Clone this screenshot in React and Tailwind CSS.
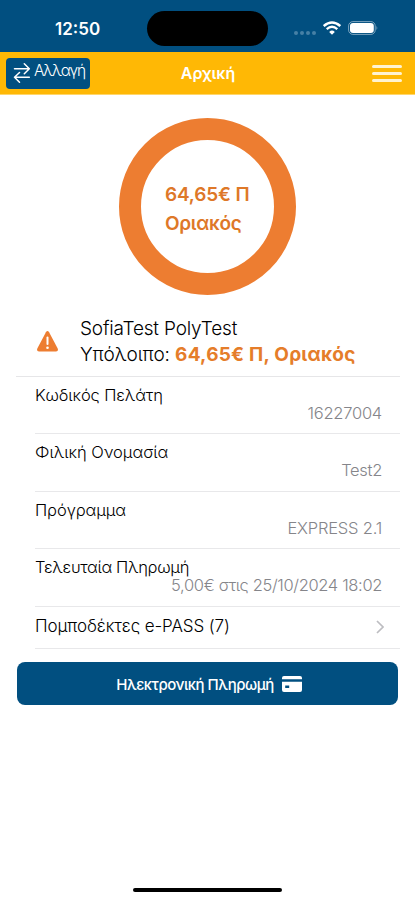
const ROWS = [
  { label: 'Κωδικός Πελάτη', value: '16227004', track: 'tracking-[-0.12px]', vtrack: 'tracking-[-0.25px]' },
  { label: 'Φιλική Ονομασία', value: 'Test2', track: 'tracking-[-0.03px]', vtrack: 'tracking-[-0.3px]' },
  { label: 'Πρόγραμμα', value: 'EXPRESS 2.1', track: 'tracking-[-0.1px]', vtrack: 'tracking-[-0.2px]' },
  { label: 'Τελευταία Πληρωμή', value: '5,00€ στις 25/10/2024 18:02', track: 'tracking-[-0.32px]', vtrack: 'tracking-[-0.35px]' },
];

function StatusBar() {
  return (
    <div className="relative flex h-[52px] items-center bg-[#014f80] pt-[5px] text-white">
      <span className="mt-px ml-[55px] text-[17px] leading-none font-semibold">12:50</span>
      <div className="absolute top-[11px] left-[147px] h-[35px] w-[121px] rounded-full bg-black" />
      <div className="mt-[8px] ml-auto flex gap-[2px]">
        {[0, 1, 2, 3].map((i) => (
          <i key={i} className="size-[4px] rounded-full bg-[#4680a5]" />
        ))}
      </div>
      <svg className="-mt-[1px] ml-[7px] h-[14px] w-[18px]" viewBox="0 0 18 14" fill="none" stroke="white">
        <path d="M.7 5Q9-2 17.3 5" strokeWidth="2.5" />
        <path d="M3.7 8.1Q9 3.5 14.3 8.1" strokeWidth="2.3" />
        <path d="M6.2 10.9Q9 8.3 11.8 10.9L9 13.8Z" fill="white" stroke="none" />
      </svg>
      <svg className="-mt-[1px] mr-[36px] ml-[7px] h-[14px] w-[31px]" viewBox="0 0 31 14">
        <rect x=".6" y=".6" width="26.6" height="12.8" rx="4.3" fill="none" stroke="#7da5bf" />
        <rect x="2" y="2" width="23.8" height="10" rx="3" fill="white" />
        <path d="M28.5 4.8Q30.2 7 28.5 9.2Z" fill="#7da5bf" />
      </svg>
    </div>
  );
}

function NavBar() {
  return (
    <div className="grid h-[43px] grid-cols-[1fr_auto_1fr] items-center border-b border-[#ffd66b] bg-[#ffb805] text-white">
      <button className="ml-[6px] flex h-[31px] w-[84px] items-center rounded-[4px] bg-[#014f80] pl-[7px]">
        <svg className="-mt-px h-[21px] w-[18px] shrink-0" viewBox="0 0 18 21" fill="none" stroke="white" strokeWidth="1.5" strokeLinecap="round" strokeLinejoin="round">
          <path d="M1.5 6.7H16M11.3 1.7 16.3 6.7 11.3 11.7M16.3 15.3H1.5M6.5 10.5 1.5 15.3 6.5 20.2" />
        </svg>
        <span className="-mt-[4px] ml-[3px] text-[15.5px] leading-none font-light tracking-[-1.15px]">Αλλαγή</span>
      </button>
      <h1 className="ml-px text-[16px] leading-none font-semibold">Αρχική</h1>
      <div className="mr-[13px] flex w-[30px] flex-col gap-[4px] justify-self-end">
        <i className="h-[3px] rounded-full bg-[#fff3d0]" />
        <i className="h-[3px] rounded-full bg-[#fff3d0]" />
        <i className="h-[3px] rounded-full bg-[#fff3d0]" />
      </div>
    </div>
  );
}

export default function App() {
  return (
    <div className="flex h-[900px] w-[415px] flex-col overflow-hidden bg-white font-['Inter',sans-serif] whitespace-nowrap text-black">
      <StatusBar />
      <NavBar />
      <div className="mt-[23px] ml-[119px] flex size-[177px] items-center rounded-full border-[22px] border-[#ed7d31] pl-[24px] text-[19px] leading-[29px] font-semibold text-[#de7828]">
        <div className="mt-[5px]">
          <div className="tracking-[-0.15px]">64,65€ Π</div>
          <div className="tracking-[-0.3px]">Οριακός</div>
        </div>
      </div>
      <div className="mr-[15px] ml-[16px] mt-[21px] flex h-[61px] items-center border-b border-[#e6e6e8] pb-[8px]">
        <svg className="-mt-[2px] ml-[21px] size-[21px]" viewBox="0 0 21 21">
          <path d="M8.9 1.2Q10.5-1 12.1 1.2L20.7 17.5Q21.7 20.2 19 20.5H2Q-.7 20.2.3 17.5Z" fill="#ed7d31" />
          <path d="M10.5 6.5V13" stroke="white" strokeWidth="2" strokeLinecap="round" />
          <circle cx="10.5" cy="16.7" r="1.3" fill="white" />
        </svg>
        <div className="ml-[22px] text-[19px] leading-[26px] font-light">
          <div className="tracking-[-0.18px]">SofiaTest PolyTest</div>
          <div className="tracking-[-0.1px]">
            Υπόλοιπο: <b className="font-bold tracking-[0.24px] text-[#e57d2a]">64,65€ Π, Οριακός</b>
          </div>
        </div>
      </div>
      {ROWS.map((row) => (
        <div key={row.label} className="mr-[15px] ml-[35px] h-[57.4px] border-b border-[#e8e8ea] pt-[8px] text-[16.5px] leading-[20px] font-light">
          <div className={row.track}>{row.label}</div>
          <div className={`-mt-[2px] mr-[18px] text-right text-[#85858a] ${row.vtrack}`}>{row.value}</div>
        </div>
      ))}
      <div className="mr-[15px] ml-[35px] flex h-[42px] items-center justify-between border-b border-[#e8e8ea] text-[17px] leading-[20px] font-light">
        <span className="-mt-[2px] tracking-[-0.1px]">Πομποδέκτες e-PASS (7)</span>
        <svg className="mr-[16px] h-[14px] w-[8px]" viewBox="0 0 8 14" fill="none" stroke="#bdbdc1" strokeWidth="1.7">
          <path d="M1 1 7 7 1 13" />
        </svg>
      </div>
      <button className="mt-[13.4px] ml-[17px] flex h-[43px] w-[381px] items-center justify-center gap-[8px] rounded-[8px] bg-[#014f80] pl-[3px] text-[15px] leading-none font-medium text-white">
        <span className="mt-[3px] tracking-[-0.48px]">Ηλεκτρονική Πληρωμή</span>
        <svg className="mt-px h-[16px] w-[20px]" viewBox="0 0 20 16">
          <path d="M2 0H18Q20 0 20 2V3.2H0V2Q0 0 2 0Z" fill="white" />
          <path d="M0 5.7H20V14Q20 16 18 16H2Q0 16 0 14ZM3.2 9.5V12H7.2V9.5Z" fill="white" fillRule="evenodd" />
        </svg>
      </button>
      <div className="mt-auto mb-[8px] ml-[133px] h-[4px] w-[149px] rounded-full bg-black" />
    </div>
  );
}
